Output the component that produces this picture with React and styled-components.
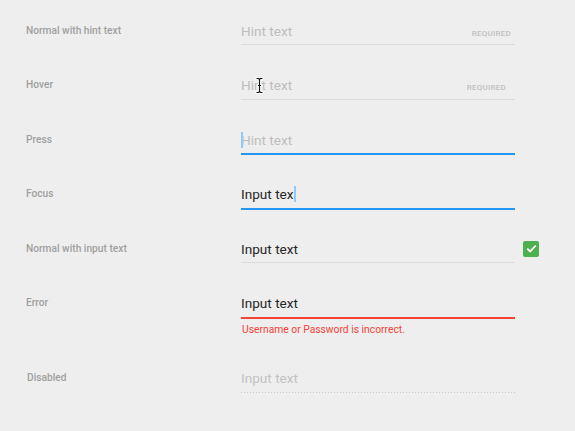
import React from "react";
import styled, { createGlobalStyle, css } from "styled-components";

const Global = createGlobalStyle`
  html, body { margin: 0; padding: 0; background: #eeeeee; }
  body { font-family: Roboto, "Noto Sans", Arial, sans-serif; }
`;

const Page = styled.div`
  width: 575px;
  height: 431px;
  background: #eeeeee;
  padding: 20.5px 0 0 26px;
  box-sizing: border-box;
  overflow: hidden;
`;

const Row = styled.div`
  display: grid;
  grid-template-columns: 215px 274px auto;
  align-items: start;
  height: ${(p) => p.$h || 54.6}px;
`;

const Label = styled.div`
  font-size: 10.2px;
  font-weight: 500;
  color: #a0a0a0;
  line-height: 20px;
  padding-left: ${(p) => p.$indent || 0}px;
`;

const Field = styled.div`
  position: relative;
  display: flex;
  flex-direction: column;
`;

const lineColors = {
  normal: "#dcdcdc",
  focus: "#2196f3",
  error: "#f44336",
};

const InputLine = styled.div`
  position: relative;
  display: flex;
  align-items: baseline;
  justify-content: space-between;
  height: 20px;
  line-height: 20px;
  padding-bottom: 3.5px;
  ${(p) =>
    p.$state === "disabled"
      ? css`
          background-image: repeating-linear-gradient(
            to right,
            #c9c9c9 0,
            #c9c9c9 1px,
            transparent 1px,
            transparent 3px
          );
          background-size: 100% 1px;
          background-repeat: no-repeat;
          background-position: bottom left;
          padding-bottom: 4.5px;
        `
      : p.$state === "normal"
      ? css`
          border-bottom: 1px solid ${lineColors.normal};
        `
      : css`
          border-bottom: 2px solid ${lineColors[p.$state]};
          margin-bottom: -1px;
        `}
`;

const Value = styled.span`
  position: relative;
  font-size: 13.6px;
  color: ${(p) => (p.$hint ? "#bdbdbd" : "#262626")};
  ${(p) => p.$disabled && css`color: #c2c2c2;`}
`;

const Required = styled.span`
  font-size: 8px;
  letter-spacing: 0.25px;
  font-weight: 500;
  color: #c0c0c0;
  padding-right: ${(p) => p.$pr || 4}px;
`;

const Caret = styled.span`
  position: absolute;
  top: ${(p) => p.$top}px;
  left: ${(p) => p.$left}px;
  width: 1.5px;
  height: 16px;
  background: #90caf9;
`;

const Pointer = styled.svg`
  position: absolute;
  left: 14px;
  top: 2px;
`;

const ErrorMsg = styled.div`
  margin-top: 5.5px;
  font-size: 10.3px;
  line-height: 14px;
  color: #f44336;
  padding-left: 1px;
`;

const Check = styled.div`
  margin: 2px 0 0 8px;
  width: 16px;
  height: 16px;
  border-radius: 2px;
  background: #4caf50;
  display: flex;
  align-items: center;
  justify-content: center;
`;

function IBeam() {
  return (
    <Pointer width="9" height="17" viewBox="0 0 9 17">
      <path
        d="M1.5 1.5h2l1 1 1-1h2M4.5 2.5v12M1.5 15.5h2l1-1 1 1h2M3 8.5h3"
        fill="none"
        stroke="#fff"
        strokeWidth="2.6"
        strokeLinecap="round"
      />
      <path
        d="M1.5 1.5h2l1 1 1-1h2M4.5 2.5v12M1.5 15.5h2l1-1 1 1h2M3 8.5h3"
        fill="none"
        stroke="#111"
        strokeWidth="1.1"
      />
    </Pointer>
  );
}

export default function App() {
  return (
    <>
      <Global />
      <Page>
        <Row>
          <Label>Normal with hint text</Label>
          <Field>
            <InputLine $state="normal">
              <Value $hint>Hint text</Value>
              <Required>REQUIRED</Required>
            </InputLine>
          </Field>
        </Row>
        <Row>
          <Label>Hover</Label>
          <Field>
            <InputLine $state="normal">
              <Value $hint>
                Hint text
                <IBeam />
              </Value>
              <Required $pr={9}>REQUIRED</Required>
            </InputLine>
          </Field>
        </Row>
        <Row>
          <Label>Press</Label>
          <Field>
            <InputLine $state="focus">
              <Value $hint>
                <Caret $top={2} $left={0} />
                Hint text
              </Value>
            </InputLine>
          </Field>
        </Row>
        <Row>
          <Label>Focus</Label>
          <Field>
            <InputLine $state="focus">
              <Value>
                Input tex
                <Caret $top={2} $left={53} />
              </Value>
            </InputLine>
          </Field>
        </Row>
        <Row>
          <Label>Normal with input text</Label>
          <Field>
            <InputLine $state="normal">
              <Value>Input text</Value>
            </InputLine>
          </Field>
          <Check>
            <svg width="11" height="9" viewBox="0 0 11 9">
              <path
                d="M1.3 4.6l2.9 2.8 5.6-5.9"
                fill="none"
                stroke="#fff"
                strokeWidth="1.8"
              />
            </svg>
          </Check>
        </Row>
        <Row $h={75}>
          <Label>Error</Label>
          <Field>
            <InputLine $state="error">
              <Value>Input text</Value>
            </InputLine>
            <ErrorMsg>Username or Password is incorrect.</ErrorMsg>
          </Field>
        </Row>
        <Row>
          <Label $indent={1}>Disabled</Label>
          <Field>
            <InputLine $state="disabled">
              <Value $disabled>Input text</Value>
            </InputLine>
          </Field>
        </Row>
      </Page>
    </>
  );
}
